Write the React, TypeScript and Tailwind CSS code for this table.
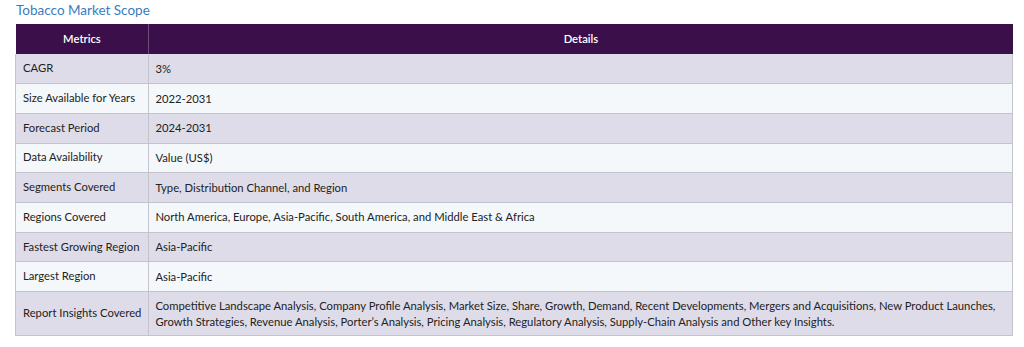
const rows: [string, string][] = [
  ['CAGR', '3%'],
  ['Size Available for Years', '2022-2031'],
  ['Forecast Period', '2024-2031'],
  ['Data Availability', 'Value (US$)'],
  ['Segments Covered', 'Type, Distribution Channel, and Region'],
  ['Regions Covered', 'North America, Europe, Asia-Pacific, South America, and Middle East & Africa'],
  ['Fastest Growing Region', 'Asia-Pacific'],
  ['Largest Region', 'Asia-Pacific'],
  [
    'Report Insights Covered',
    'Competitive Landscape Analysis, Company Profile Analysis, Market Size, Share, Growth, Demand, Recent Developments, Mergers and Acquisitions, New Product Launches, Growth Strategies, Revenue Analysis, Porter\u2019s Analysis, Pricing Analysis, Regulatory Analysis, Supply-Chain Analysis and Other key Insights.',
  ],
];

function App() {
  return (
    <div className="bg-white w-[1024px] h-[347px] font-['Lato',sans-serif] text-[#222]">
      <h2 className="pl-4 text-[13.5px] leading-[20px] text-[#3a7cc0]">Tobacco Market Scope</h2>
      <table className="ml-[15px] mt-[4px] w-[998px] border-collapse text-[11.25px]">
        <thead>
          <tr className="bg-[#3a0f4a] text-white h-[30px]">
            <th className="w-[133px] font-semibold border-r border-[#6b4d78]">Metrics</th>
            <th className="font-semibold">Details</th>
          </tr>
        </thead>
        <tbody>
          {rows.map(([m, d], i) => (
            <tr
              key={m}
              className={`${i % 2 === 0 ? 'bg-[#dfdce9]' : 'bg-[#f4f8fb]'} border-b border-[#c3c3cc] ${i === rows.length - 1 ? 'h-[44px]' : 'h-[29.7px]'}`}
            >
              <td className="px-[7px] border-l border-r border-[#c3c3cc] align-middle whitespace-nowrap">{m}</td>
              <td className="px-[6px] border-r border-[#c3c3cc] leading-[16px] align-middle">{d}</td>
            </tr>
          ))}
        </tbody>
      </table>
    </div>
  );
}

export default App;
